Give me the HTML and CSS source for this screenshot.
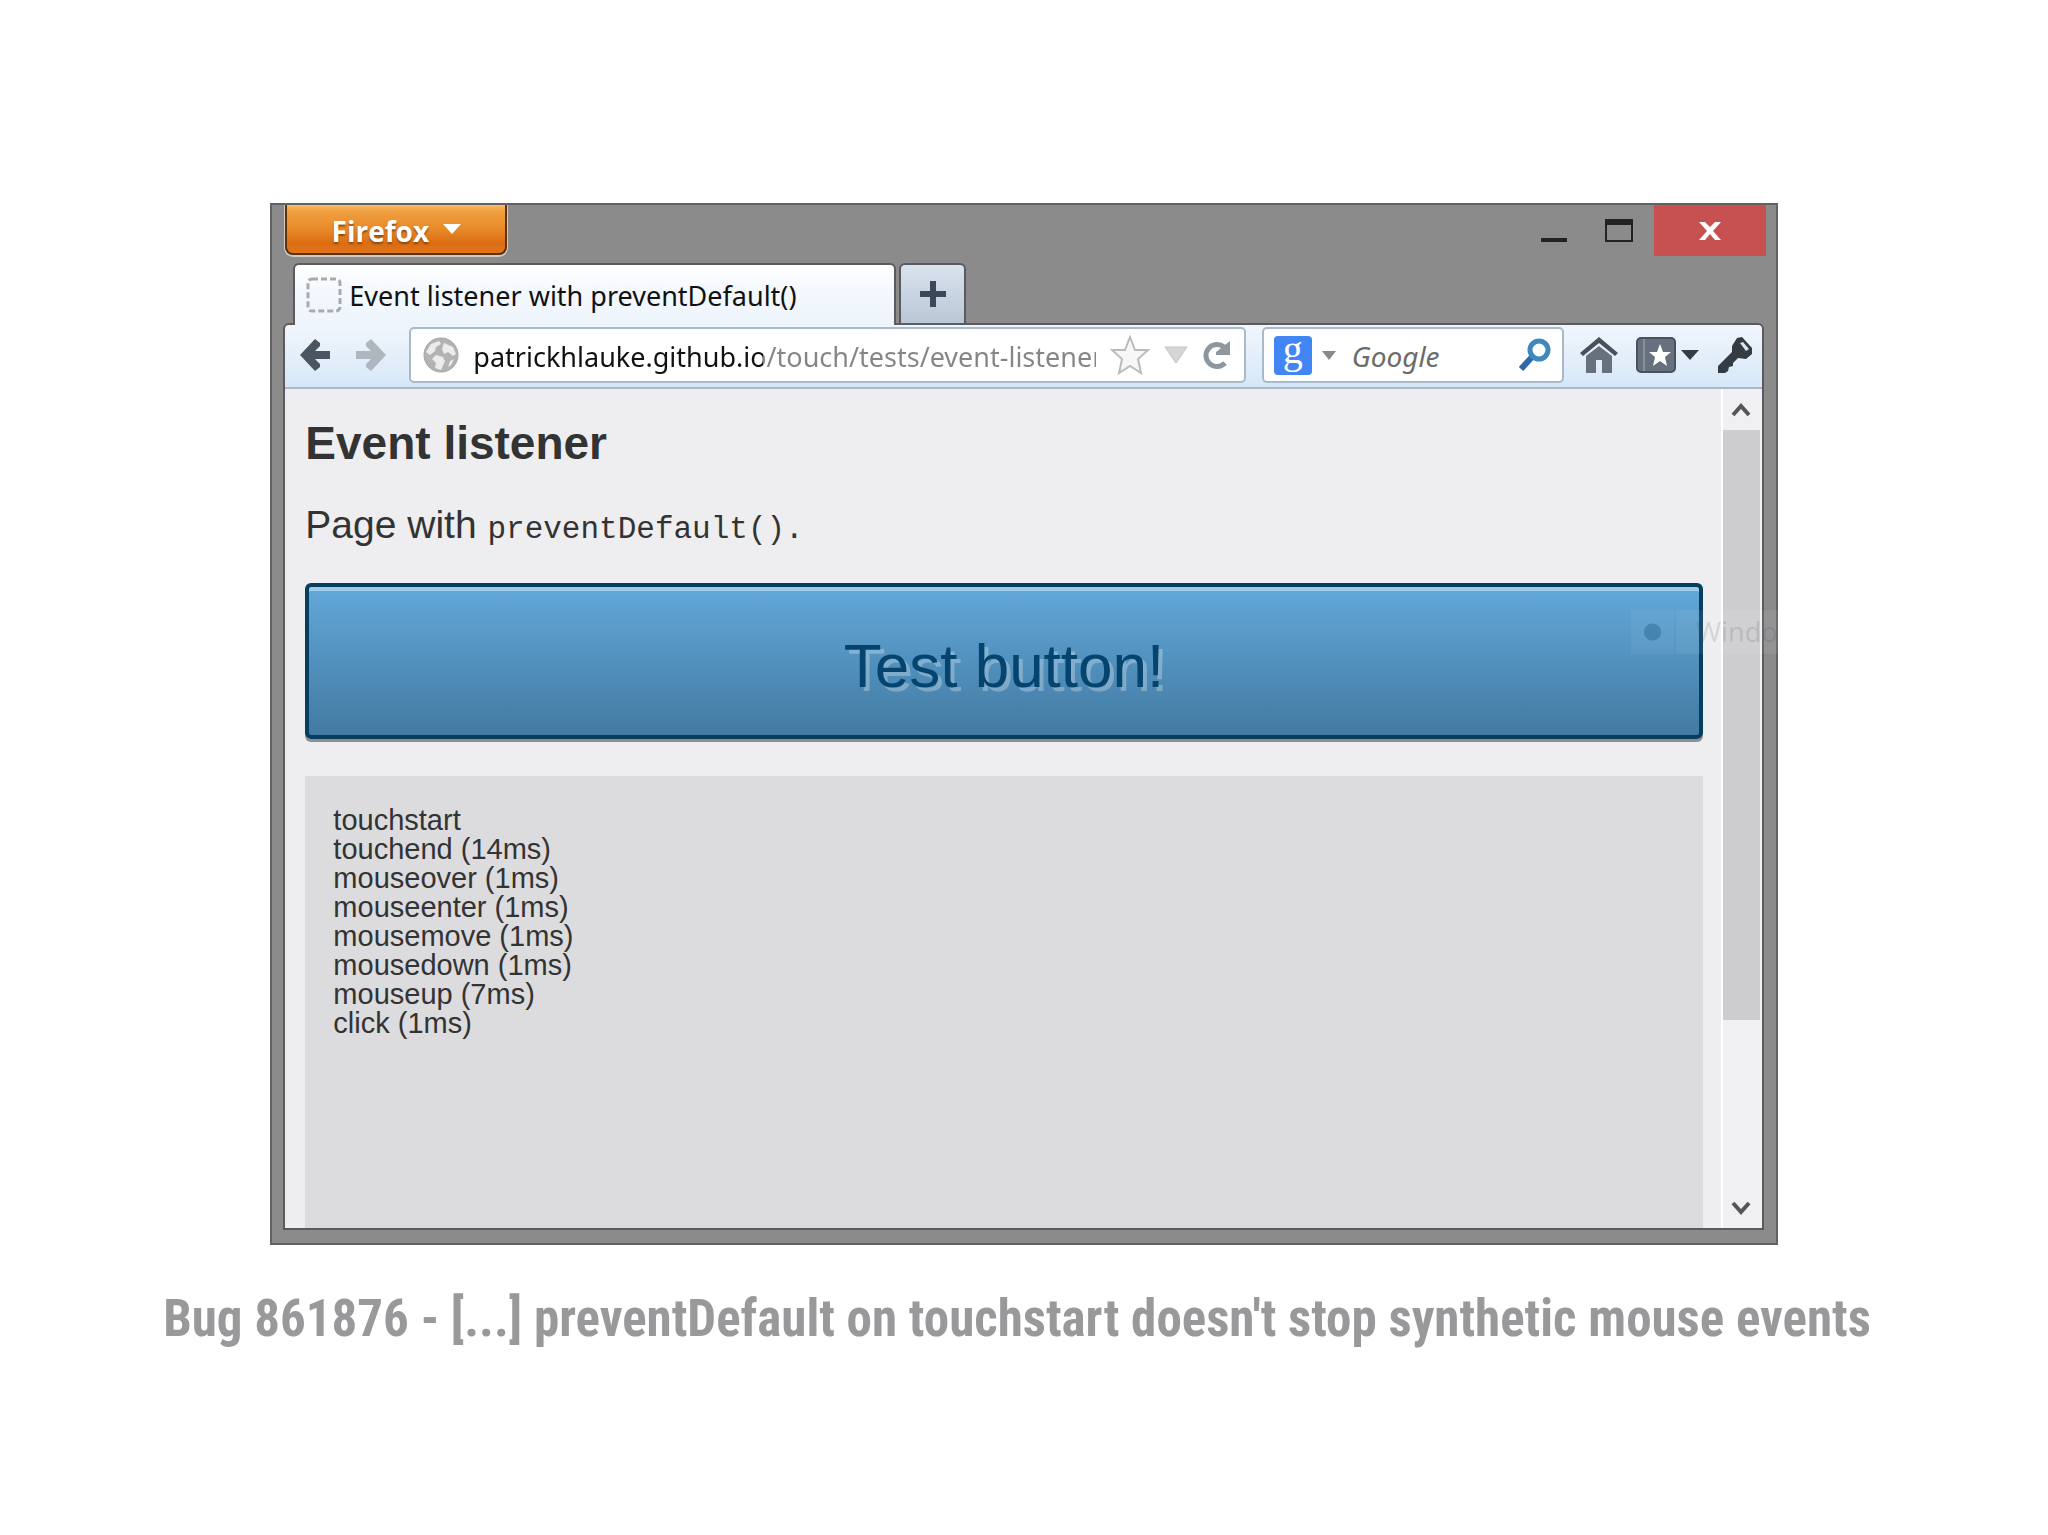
FILE: index.html
```html
<!DOCTYPE html>
<html lang="en">
<head>
  <meta charset="UTF-8">
  <meta name="viewport" content="width=device-width, initial-scale=1.0">
  <title>Bug 861876</title>
  <link rel="stylesheet" href="styles.css">
</head>
<body>
  <main class="slide">
    <div class="window">
      <header class="titlebar">
        <button class="firefox" type="button">Firefox
          <svg width="18" height="18" viewBox="0 0 18 18"><path d="M0 2H18L9 12Z" fill="#fff"/></svg>
        </button>
        <div class="winbuttons">
          <button class="winbtn" type="button" aria-label="Minimize">
            <svg width="28" height="26" viewBox="0 0 28 26"><path d="M1 20H27V24H1Z" fill="#222"/></svg>
          </button>
          <button class="winbtn" type="button" aria-label="Maximize">
            <svg width="28" height="26" viewBox="0 0 28 26"><path d="M0 1H28V24H0ZM2 7V22H26V7Z" fill="#222" fill-rule="evenodd"/></svg>
          </button>
          <button class="winbtn close" type="button" aria-label="Close">
            <svg width="22" height="18" viewBox="0 0 22 18"><path d="M0 0H6L11 5L16 0H22L14 9L22 18H16L11 12L6 18H0L8 9Z" fill="#fff"/></svg>
          </button>
        </div>
      </header>

      <div class="tabs">
        <button class="tab" type="button">
          <svg width="36" height="36" viewBox="0 0 36 36"><rect x="2" y="2" width="32" height="32" rx="4" fill="none" stroke="#aaa" stroke-width="3" stroke-dasharray="6 3"/></svg>
          <span>Event listener with preventDefault()</span>
        </button>
        <button class="newtab" type="button" aria-label="New tab">
          <svg width="26" height="26" viewBox="0 0 26 26"><path d="M10 0H16V10H26V16H16V26H10V16H0V10H10Z" fill="#3c4858"/></svg>
        </button>
      </div>

      <div class="client">
        <div class="toolbar">
          <div class="nav">
            <button type="button" aria-label="Back">
              <svg width="32" height="34" viewBox="0 0 32 34"><path d="M1 17L16 1L21 5V8L16 13H31V21H16L21 26V29L16 33Z" fill="#4a5561"/></svg>
            </button>
            <button type="button" aria-label="Forward">
              <svg width="32" height="34" viewBox="0 0 32 34"><path d="M31 17L16 1L11 5V8L16 13H1V21H16L11 26V29L16 33Z" fill="#aeb7be"/></svg>
            </button>
          </div>
          <div class="field address">
            <svg width="36" height="36" viewBox="0 0 36 36"><circle cx="18" cy="18" r="17" fill="#b3b3b3" stroke="#a2a2a2"/><path d="M8 7L16 4L18 7L13 10L12 14L7 18L3 15ZM21 6L30 10L33 17L30 19L25 15L21 17L19 12ZM13 18L20 20L22 24L18 33L12 31L13 26L9 22ZM27 24L31 22L28 28L25 30Z" fill="#ececec"/></svg>
            <input class="url" type="text" aria-label="Address" value="patrickhlauke.github.io/touch/tests/event-listener">
            <button type="button" aria-label="Bookmark">
              <svg width="40" height="40" viewBox="0 0 40 40"><path d="M20 2L25 15L38 15L28 24L31 38L20 31L9 38L12 24L2 15L15 15Z" fill="#f7f7f8" stroke="#bbb" stroke-width="2"/></svg>
            </button>
            <button type="button" aria-label="History">
              <svg width="24" height="18" viewBox="0 0 24 18"><path d="M1 1H23L12 17Z" fill="#d6d6d6" stroke="#c0c0c0"/></svg>
            </button>
            <button type="button" aria-label="Reload">
              <svg width="28" height="28" viewBox="0 0 28 28"><path d="M22 6A11 11 0 1 0 23 22" fill="none" stroke="#8f979e" stroke-width="5"/><path d="M28 0V14H14V11Z" fill="#8f979e"/></svg>
            </button>
          </div>
          <div class="field search">
            <button type="button" class="engine" aria-label="Search engine"><span class="glogo">g</span>
              <svg width="14" height="9" viewBox="0 0 14 9"><path d="M0 0H14L7 9Z" fill="#888"/></svg>
            </button>
            <input class="query" type="text" aria-label="Search" placeholder="Google">
            <button type="button" aria-label="Go">
              <svg width="34" height="34" viewBox="0 0 34 34"><path d="M14 19L3 31" stroke="#2f68ac" stroke-width="6"/><circle cx="21" cy="12" r="9" fill="#fff" stroke="#3f88bd" stroke-width="5"/></svg>
            </button>
          </div>
          <div class="tools">
            <button type="button" aria-label="Home">
              <svg width="38" height="36" viewBox="0 0 38 36"><path d="M19 0L38 16L35 19L19 6L3 19L0 16Z" fill="#48525e"/><path d="M6 19L19 9L32 19V36H22V23H16V36H6Z" fill="#66717d"/></svg>
            </button>
            <button type="button" class="marks" aria-label="Bookmarks">
              <svg width="40" height="36" viewBox="0 0 40 36"><rect x="1" y="1" width="38" height="34" rx="4" fill="#66717d" stroke="#48525e" stroke-width="2"/><path d="M8 2V34" stroke="#86909a" stroke-width="2"/><path d="M24 7L27 15H35L29 20L31 29L24 24L17 29L19 20L13 15H21Z" fill="#fff"/></svg>
              <svg width="18" height="10" viewBox="0 0 18 10"><path d="M0 0H18L9 10Z" fill="#333d48"/></svg>
            </button>
            <button type="button" aria-label="Key">
              <svg width="36" height="36" viewBox="0 0 36 36"><path d="M20 1L25 0L35 11V17L29 22L21 21L16 26V29L12 30L11 34L8 36H1V29L15 15V9Z" fill="#343b43"/><path d="M23 6L26 5L32 12L29 14Z" fill="#dde6f0"/></svg>
            </button>
          </div>
        </div>

        <div class="viewport">
          <section class="page">
            <h1>Event listener</h1>
            <p>Page with <code>preventDefault().</code></p>
            <button class="test" type="button">Test button!</button>
            <ul class="log">
              <li>touchstart</li>
              <li>touchend (14ms)</li>
              <li>mouseover (1ms)</li>
              <li>mouseenter (1ms)</li>
              <li>mousemove (1ms)</li>
              <li>mousedown (1ms)</li>
              <li>mouseup (7ms)</li>
              <li>click (1ms)</li>
            </ul>
          </section>
          <div class="scrollbar">
            <button type="button" aria-label="Scroll up">
              <svg width="20" height="16" viewBox="0 0 20 16"><path d="M2 13L10 4L18 13" fill="none" stroke="#555" stroke-width="4"/></svg>
            </button>
            <div class="track"><div class="thumb"></div></div>
            <button type="button" aria-label="Scroll down">
              <svg width="20" height="16" viewBox="0 0 20 16"><path d="M2 3L10 12L18 3" fill="none" stroke="#555" stroke-width="4"/></svg>
            </button>
          </div>
        </div>
      </div>

      <!-- faded window snip tooltip -->
      <div class="ghost"><span class="dot"></span><span class="ghosttext">Windo</span></div>
    </div>
    <p class="caption">Bug 861876 - [...] preventDefault on touchstart doesn't stop synthetic mouse events</p>
  </main>
</body>
</html>
```
FILE: styles.css
```css
* { box-sizing: border-box; }

body {
  margin: 0;
  background: #fff;
  font-family: "Liberation Sans", Arial, sans-serif;
  color: #333;
}
button { border: 0; padding: 0; margin: 0; background: none; font: inherit; color: inherit; }
svg { display: block; flex: none; }

.slide { padding-top: 203px; }

.window {
  position: relative;
  width: 73.6%;
  margin: 0 auto;
  padding: 0 14px 13px 13px;
  background: #8b8b8c;
  border: 2px solid #626264;
}

/* title bar */
.titlebar { display: flex; justify-content: space-between; align-items: flex-start; height: 58px; }
.firefox {
  display: flex;
  align-items: center;
  justify-content: center;
  gap: 14px;
  width: 222px;
  height: 50px;
  padding-top: 4px;
  color: #fff;
  font: bold 28px "Open Sans", "Noto Sans", sans-serif;
  text-shadow: 0 2px 2px #8a4a10;
  background: linear-gradient(#f8c06a, #f0a040 12%, #e88a2a 50%, #dc6c12 80%, #e0751c);
  border: 2px solid #5c330c;
  border-top: 0;
  border-radius: 0 0 8px 8px;
  box-shadow: 0 1px 0 1px #d0cbc6;
}
.winbuttons { display: flex; }
.winbtn { display: flex; align-items: center; justify-content: center; width: 65px; height: 51px; }
.close { width: 112px; background: #c75050; margin-left: 2px; margin-right: -4px; }

/* tabs */
.tabs { display: flex; gap: 3px; padding-left: 8px; height: 60px; }
.tab {
  display: flex;
  align-items: center;
  gap: 7px;
  width: 603px;
  height: 62px;
  padding: 0 11px;
  z-index: 1;
  color: #111;
  font: 27px "Noto Sans", sans-serif;
  white-space: nowrap;
  background: linear-gradient(#fff, #f4f9fe 40%, #edf4fb);
  border: 2px solid #5b5b5f;
  border-bottom: 0;
  border-radius: 6px 6px 0 0;
}
.newtab {
  display: flex;
  align-items: center;
  justify-content: center;
  width: 67px;
  background: linear-gradient(#d9e3ee, #b9c7d6);
  border: 2px solid #5b5b5f;
  border-bottom: 0;
  border-radius: 6px 6px 0 0;
}

/* navigation toolbar */
.client { border: 2px solid #5b5b5f; border-radius: 6px 6px 0 0; margin: 0 -2px; overflow: hidden; }
.toolbar {
  display: flex;
  align-items: center;
  gap: 16px;
  height: 64px;
  padding: 0 9px 2px 14px;
  background: linear-gradient(#f1f6fc, #d7e7f8);
  border-bottom: 2px solid #a9b8c8;
}
.nav { display: flex; gap: 24px; width: 94px; }
.field {
  display: flex;
  align-items: center;
  height: 56px;
  background: #fff;
  border: 2px solid #a8b9c9;
  border-radius: 5px;
}
.field input {
  min-width: 0;
  border: 0;
  padding: 2px 0 0;
  outline: 0;
  font: 28px "Noto Sans", sans-serif;
}
.address { flex: 1; gap: 14px; padding: 0 14px 0 12px; }
/* host part dark, path part gray */
.field .url {
  flex: 1;
  font-size: 27px;
  color: transparent;
  background: linear-gradient(to right, #111 290px, #858585 290px);
  -webkit-background-clip: text;
  background-clip: text;
}
.search { width: 302px; padding: 0 10px; gap: 16px; }
.search .query { flex: 1; font-style: italic; }
.query::placeholder { color: #6b6b6b; }
.engine { display: flex; align-items: center; gap: 10px; }
.glogo {
  width: 38px;
  height: 39px;
  border-radius: 4px;
  background: #4285f4;
  color: #fff;
  font: 40px/28px "Liberation Serif", serif;
  text-align: center;
}
.tools { display: flex; align-items: center; gap: 18px; }
.marks { display: flex; align-items: center; gap: 5px; }

/* page */
.viewport { display: flex; background: #eeeef0; }
.page { flex: 1; padding: 27px 18px 0 20px; }
h1 { margin: 0; font-size: 46px; line-height: 54px; }
.page p { margin: 0; padding-top: 32px; font-size: 39px; line-height: 46px; }
code { font: 31px "Liberation Mono", monospace; }
.test {
  display: block;
  width: 100%;
  height: 156px;
  margin: 35px 0 37px;
  padding-top: 8px;
  font-size: 62px;
  color: #04446f;
  text-shadow: 4px 4px 0 rgba(255, 255, 255, .28);
  background: linear-gradient(#62a8d9, #427aa2);
  border: 4px solid #043f60;
  border-radius: 6px;
  box-shadow: 0 3px 0 #8f8f92, inset 0 4px 0 #a0cbe8;
}
.log {
  min-height: 452px;
  margin: 0;
  padding: 30px 28px;
  list-style: none;
  background: #dcdcde;
  font-size: 29px;
  line-height: 29px;
}

.scrollbar {
  display: flex;
  flex-direction: column;
  width: 41px;
  padding-right: 2px;
  background: #f0eff2;
  border-left: 2px solid #fff;
}
.scrollbar button { display: flex; align-items: center; justify-content: center; height: 41px; }
.track { flex: 1; }
.thumb { height: 78%; background: #cdcccf; }

.ghost {
  position: absolute;
  top: 405px;
  right: -2px;
  display: flex;
  align-items: center;
  gap: 2px;
  height: 44px;
  color: rgba(70, 70, 80, .16);
}
.dot { width: 43px; height: 44px; background: radial-gradient(circle, rgba(30, 80, 120, .3) 8px, rgba(255, 255, 255, .05) 9px); }
.ghosttext { padding-left: 20px; background: rgba(255, 255, 255, .07); font: 27px/44px "Noto Sans", sans-serif; }

.caption {
  margin: 40px 14px 0 0;
  text-align: center;
  color: #99989b;
  font: bold 51px/68px "Roboto Condensed", Roboto, sans-serif;
}
```
